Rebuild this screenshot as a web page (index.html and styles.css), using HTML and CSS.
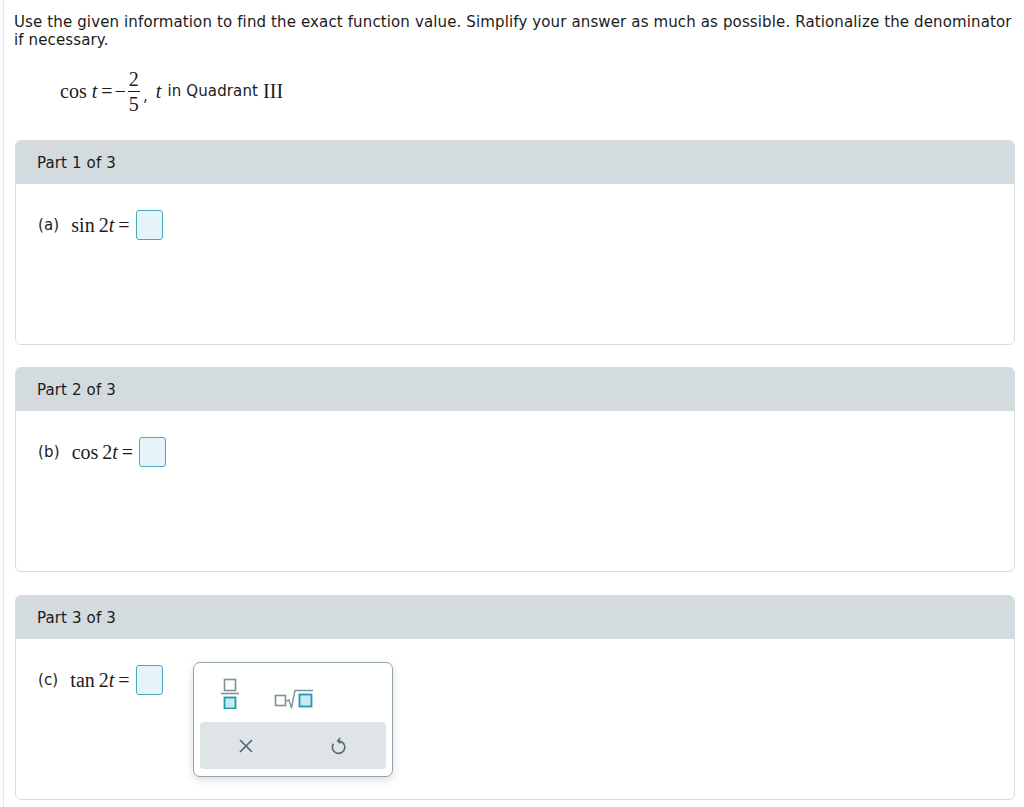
FILE: index.html
```html
<!DOCTYPE html>
<html lang="en">
  <head>
    <meta charset="UTF-8" />
    <meta name="viewport" content="width=device-width, initial-scale=1.0" />
    <title>Double angle question</title>
    <link rel="stylesheet" href="styles.css">
  </head>
  <body>
    <div class="page">
      <p class="prompt">
        Use the given information to find the exact function value. Simplify your answer as much as possible. Rationalize the denominator if necessary.
      </p>

      <div class="given">
        <span class="math">cos <i>t</i></span>
        <span class="math eq">=</span>
        <span class="math minus">&minus;</span>
        <span class="frac">
          <span class="num">2</span>
          <span class="den">5</span>
        </span>
        <span class="comma">,</span>
        <span class="math"><i>t</i></span>
        <span class="plain">in Quadrant</span>
        <span class="math">III</span>
      </div>

      <!-- Part 1 -->
      <div class="card">
        <div class="card-head">Part 1 of 3</div>
        <div class="card-body">
          <div class="answer-row">
            <span class="label">(a)</span>
            <span class="math expr">sin&thinsp;2<i>t</i>&thinsp;=</span>
            <span class="answer-box"></span>
          </div>
        </div>
      </div>

      <!-- Part 2 -->
      <div class="card">
        <div class="card-head">Part 2 of 3</div>
        <div class="card-body">
          <div class="answer-row">
            <span class="label">(b)</span>
            <span class="math expr">cos&thinsp;2<i>t</i>&thinsp;=</span>
            <span class="answer-box"></span>
          </div>
        </div>
      </div>

      <!-- Part 3 -->
      <div class="card last">
        <div class="card-head">Part 3 of 3</div>
        <div class="card-body">
          <div class="answer-row">
            <span class="label">(c)</span>
            <span class="math expr">tan&thinsp;2<i>t</i>&thinsp;=</span>
            <span class="answer-box"></span>

            <div class="palette">
              <div class="palette-tools">
                <svg class="tool" width="20" height="32" viewBox="0 0 20 32">
                  <rect x="4.5" y="2.5" width="11" height="11" fill="none" stroke="#7d939b" stroke-width="1.6"/>
                  <line x1="1" y1="16.5" x2="19" y2="16.5" stroke="#7d939b" stroke-width="1.6"/>
                  <rect x="4.5" y="20.5" width="11" height="11" fill="#c9e9ef" stroke="#1d9bb1" stroke-width="1.8"/>
                </svg>
                <svg class="tool" width="40" height="22" viewBox="0 0 40 22">
                  <rect x="1.5" y="8.5" width="10" height="10" fill="none" stroke="#7d939b" stroke-width="1.6"/>
                  <polyline points="12.5,14 15,13 17.5,21 21,3.5 39,3.5" fill="none" stroke="#7d939b" stroke-width="1.4"/>
                  <rect x="25.5" y="7.5" width="12" height="12" fill="#c9e9ef" stroke="#1d9bb1" stroke-width="1.8"/>
                </svg>
              </div>
              <div class="palette-actions">
                <svg width="14" height="14" viewBox="0 0 14 14">
                  <path d="M1 1 L13 13 M13 1 L1 13" stroke="#4f6b77" stroke-width="1.7" fill="none"/>
                </svg>
                <svg width="16" height="18" viewBox="0 0 16 18">
                  <path d="M7 4 A6.2 6.2 0 1 1 2.4 6.8" stroke="#4f6b77" stroke-width="1.6" fill="none"/>
                  <path d="M9.2 1 L6.6 4 L9.6 6.4" stroke="#4f6b77" stroke-width="1.6" fill="none" stroke-linejoin="round"/>
                </svg>
              </div>
            </div>
          </div>
        </div>
      </div>
    </div>
  </body>
</html>
```

FILE: styles.css
```css
body {
  margin: 0;
  background-color: white;
  color: #1b1b1b;
  font-family: "DejaVu Sans", Verdana, sans-serif;
  font-size: 15px;
  letter-spacing: 0.13px;
}

.page {
  margin-left: 3px;
  border-left: 1px solid #e4e8ea;
  padding: 13px 9px 8px 11px;
  min-height: 786px;
}

.prompt {
  margin: 0 0 0 -1px;
  line-height: 18px;
}

.math {
  font-family: "Liberation Serif", "Times New Roman", serif;
  font-size: 20px;
  letter-spacing: 0;
}

.given {
  display: flex;
  align-items: center;
  height: 50px;
  margin: 17px 0 24px 45px;
}

.given .eq {
  margin: 0 2px 0 4px;
}

.frac {
  display: inline-flex;
  flex-direction: column;
  align-items: center;
  margin-left: 2px;
  font-family: "Liberation Serif", "Times New Roman", serif;
  font-size: 20px;
  line-height: 20px;
}

.frac .num {
  border-bottom: 1px solid #1b1b1b;
  padding: 0 1px 2px;
}

.frac .den {
  padding-top: 2px;
}

.comma {
  margin: 10px 8px 0 3px;
}

.plain {
  margin: 0 5px 0 6px;
}

.card {
  border: 1px solid #d5dde1;
  border-radius: 6px;
  margin-bottom: 22px;
  height: 203px;
}

.card.last {
  margin-top: 23px;
}

.card-head {
  background-color: #d3dbde;
  border-radius: 5px 5px 0 0;
  height: 43px;
  line-height: 44px;
  padding-left: 21px;
}

.card-body {
  padding: 26px 0 0 22px;
}

.answer-row {
  position: relative;
  display: flex;
  align-items: center;
  height: 30px;
}

.label {
  margin-right: 12px;
}

.expr {
  margin-right: 6px;
}

.answer-box {
  display: inline-block;
  width: 25px;
  height: 28px;
  background-color: #e5f4f8;
  border: 1px solid #4fa7b8;
  border-radius: 3px;
}

.palette {
  position: absolute;
  left: 155px;
  top: -3px;
  width: 198px;
  height: 113px;
  border: 1px solid #8fa4ad;
  border-radius: 7px;
  background-color: white;
  box-shadow: 0 3px 8px rgba(0, 0, 0, 0.14);
}

.palette-tools {
  display: flex;
  align-items: flex-end;
  gap: 34px;
  height: 46px;
  padding-left: 26px;
}

.palette-tools .tool {
  display: block;
}

.palette-actions {
  display: flex;
  justify-content: space-around;
  align-items: center;
  margin: 13px 6px 0;
  height: 47px;
  background-color: #dfe5e7;
  border-radius: 4px;
}
```
